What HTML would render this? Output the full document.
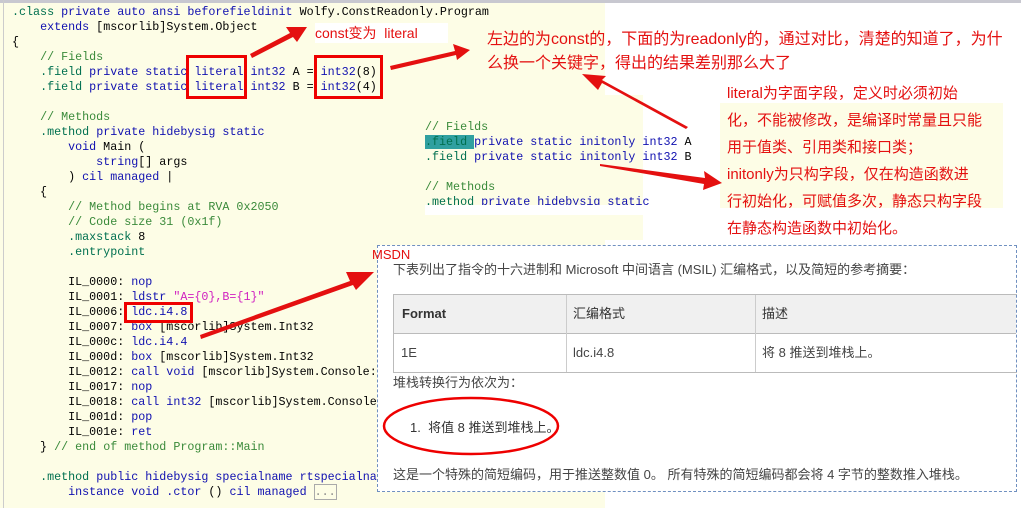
<!DOCTYPE html>
<html><head><meta charset="utf-8"><style>
body{margin:0;width:1021px;height:519px;overflow:hidden;background:#fff;position:relative;font-family:"Liberation Sans","Noto Sans CJK SC",sans-serif}
.a{position:absolute}
.code{font-family:"Liberation Mono",monospace;font-size:11.7px;line-height:15px;white-space:pre;color:#000}
.k{color:#1010b0}.d{color:#007050}.c{color:#3a8a3a}.s{color:#d020c0}
.red{color:#e41010}
.box{position:absolute;border:3px solid #e00}
.cn{font-size:13px;line-height:16px;height:16px;color:#444;white-space:nowrap}
.cn span{vertical-align:top}
</style></head><body>
<div class="a" style="left:0;top:0;width:605px;height:508px;background:#fdfde6"></div>
<div class="a" style="left:605px;top:95px;width:38px;height:145px;background:#fdfde6"></div>
<div class="a" style="left:0;top:0;width:1021px;height:3px;background:#c8c8d0"></div>
<div class="a" style="left:3px;top:0;width:1px;height:508px;background:#ccc"></div>
<div class="a" style="left:720px;top:103px;width:283px;height:105px;background:#fdfde6"></div>

<div class="a code" style="left:12px;top:5px"><span class="d">.class</span> <span class="k">private auto ansi beforefieldinit</span> Wolfy.ConstReadonly.Program
    <span class="k">extends</span> [mscorlib]System.Object
{
    <span class="c">// Fields</span>
    <span class="d">.field</span> <span class="k">private static literal int32</span> A = <span class="k">int32</span>(8)
    <span class="d">.field</span> <span class="k">private static literal int32</span> B = <span class="k">int32</span>(4)

    <span class="c">// Methods</span>
    <span class="d">.method</span> <span class="k">private hidebysig static</span>
        <span class="k">void</span> Main (
            <span class="k">string</span>[] args
        ) <span class="k">cil managed</span> |
    {
        <span class="c">// Method begins at RVA 0x2050</span>
        <span class="c">// Code size 31 (0x1f)</span>
        <span class="d">.maxstack</span> 8
        <span class="d">.entrypoint</span>

        IL_0000: <span class="k">nop</span>
        IL_0001: <span class="k">ldstr</span> <span class="s">"A={0},B={1}"</span>
        IL_0006: <span class="k">ldc.i4.8</span>
        IL_0007: <span class="k">box</span> [mscorlib]System.Int32
        IL_000c: <span class="k">ldc.i4.4</span>
        IL_000d: <span class="k">box</span> [mscorlib]System.Int32
        IL_0012: <span class="k">call void</span> [mscorlib]System.Console:
        IL_0017: <span class="k">nop</span>
        IL_0018: <span class="k">call int32</span> [mscorlib]System.Console
        IL_001d: <span class="k">pop</span>
        IL_001e: <span class="k">ret</span>
    } <span class="c">// end of method Program::Main</span>

    <span class="d">.method</span> <span class="k">public hidebysig specialname rtspecialna</span>
        <span class="k">instance void .ctor</span> () <span class="k">cil managed</span> <span style="border:1px solid #aaa;color:#888">...</span></div>

<div class="a code" style="left:425px;top:120px"><span class="c">// Fields</span>
<span class="d" style="background:#30a0a0">.field </span><span class="k">private static initonly int32</span> A
<span class="d">.field</span> <span class="k">private static initonly int32</span> B

<span class="c">// Methods</span>
<span class="d">.method</span> <span class="k">private hidebysig static</span></div>
<div class="a" style="left:425px;top:205px;width:220px;height:10px;background:#fff"></div>

<div class="box" style="left:186px;top:55px;width:55px;height:38px"></div>
<div class="box" style="left:314px;top:55px;width:63px;height:38px"></div>
<div class="box" style="left:124px;top:302px;width:63px;height:15px"></div>

<div class="a red" style="left:315px;top:23px;font-size:14px;background:#fff;padding-right:30px">const变为&nbsp; literal</div>
<div class="a red" style="left:487px;top:28px;font-size:16px;line-height:24px">左边的为const的，下面的为readonly的，通过对比，清楚的知道了，为什<br>么换一个关键字，得出的结果差别那么大了</div>
<div class="a red" style="left:727px;top:80px;font-size:15px;line-height:27px">literal为字面字段，定义时必须初始<br>化，不能被修改，是编译时常量且只能<br>用于值类、引用类和接口类；<br>initonly为只构字段，仅在构造函数进<br>行初始化，可赋值多次，静态只构字段<br>在静态构造函数中初始化。</div>

<div class="a" style="left:377px;top:245px;width:638px;height:245px;background:#fff;border:1px dashed #7090c0"></div>
<div class="a red" style="left:372px;top:247px;font-size:13px">MSDN</div>
<div class="a cn" style="left:393px;top:262px">下表列出了指令的十六进制和 Microsoft 中间语言 (MSIL) 汇编格式，以及简短的参考摘要：</div>
<div class="a" style="left:393px;top:294px;width:623px;height:77px;border:1px solid #bbb;border-right:none"></div>
<div class="a" style="left:394px;top:295px;width:622px;height:38px;background:#f0f0f0;border-bottom:1px solid #bbb"></div>
<div class="a" style="left:566px;top:295px;width:1px;height:77px;background:#ccc"></div>
<div class="a" style="left:755px;top:295px;width:1px;height:77px;background:#ccc"></div>
<div class="a cn" style="left:402px;top:306px;font-weight:bold;color:#333">Format</div>
<div class="a cn" style="left:573px;top:306px;color:#333">汇编格式</div>
<div class="a cn" style="left:762px;top:306px;color:#333">描述</div>
<div class="a cn" style="left:401px;top:345px">1E</div>
<div class="a cn" style="left:573px;top:345px">ldc.i4.8</div>
<div class="a cn" style="left:762px;top:345px">将 8 推送到堆栈上。</div>
<div class="a cn" style="left:393px;top:375px">堆栈转换行为依次为：</div>
<div class="a cn" style="left:410px;top:420px;color:#333">1.&nbsp; 将值 8 推送到堆栈上。</div>
<div class="a cn" style="left:393px;top:467px">这是一个特殊的简短编码，用于推送整数值 0。 所有特殊的简短编码都会将 4 字节的整数推入堆栈。</div>

<svg class="a" style="left:0;top:0" width="1021" height="519">
<ellipse cx="471" cy="426" rx="87" ry="28" fill="none" stroke="#e00" stroke-width="2.5"/>
<g fill="#e41010">
<polygon points="250,54 290,33 286,27 307,27 297,42 293,37 252,58"/>
<polygon points="390,66 455,51 453,44 470,50 457,60 456,55 391,70"/>
<polygon points="686,129 602,83 598,90 582,74 606,76 602,80 688,127"/>
<polygon points="600,164 705,178 704,171 722,183 703,190 704,184 600,166"/>
<polygon points="200,335 350,281 346,272 374,272 356,290 353,285 201,339"/>
</g>
</svg>
</body></html>
